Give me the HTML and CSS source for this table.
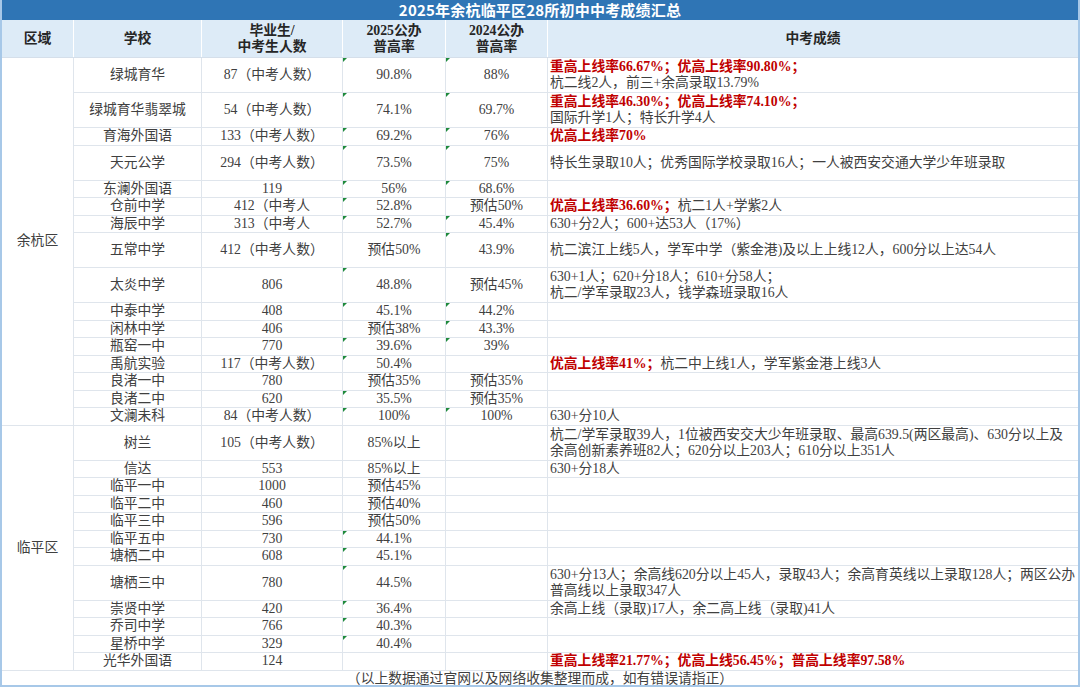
FILE: index.html
```html
<!DOCTYPE html>
<html lang="zh-CN">
<head>
<meta charset="utf-8">
<title>2025年余杭临平区28所初中中考成绩汇总</title>
<link rel="stylesheet" href="styles.css">
</head>
<body>
<div class="sheet">
  <div class="title">2025年余杭临平区28所初中中考成绩汇总</div>
  <div class="head">
    <div class="hc">区域</div>
    <div class="hc">学校</div>
    <div class="hc">毕业生/<br>中考生人数</div>
    <div class="hc">2025公办<br>普高率</div>
    <div class="hc">2024公办<br>普高率</div>
    <div class="hc">中考成绩</div>
  </div>
  <div class="body">
    <div class="c area yh">余杭区</div>
    <div class="c area lp">临平区</div>

    <div class="c">绿城育华</div><div class="c">87（中考人数）</div><div class="c m">90.8%</div><div class="c m">88%</div><div class="c res"><div class="t"><span class="red">重高上线率66.67%；优高上线率90.80%；</span><br>杭二线2人，前三+余高录取13.79%</div></div>
    <div class="c">绿城育华翡翠城</div><div class="c">54（中考人数）</div><div class="c m">74.1%</div><div class="c m">69.7%</div><div class="c res"><div class="t"><span class="red">重高上线率46.30%；优高上线率74.10%；</span><br>国际升学1人；特长升学4人</div></div>
    <div class="c">育海外国语</div><div class="c">133（中考人数）</div><div class="c m">69.2%</div><div class="c m">76%</div><div class="c res"><div class="t"><span class="red">优高上线率70%</span></div></div>
    <div class="c">天元公学</div><div class="c">294（中考人数）</div><div class="c m">73.5%</div><div class="c m">75%</div><div class="c res"><div class="t">特长生录取10人；优秀国际学校录取16人；一人被西安交通大学少年班录取</div></div>
    <div class="c">东澜外国语</div><div class="c">119</div><div class="c m">56%</div><div class="c m">68.6%</div><div class="c res"></div>
    <div class="c">仓前中学</div><div class="c">412（中考人</div><div class="c m">52.8%</div><div class="c">预估50%</div><div class="c res"><div class="t"><span class="red">优高上线率36.60%；</span>杭二1人+学紫2人</div></div>
    <div class="c">海辰中学</div><div class="c">313（中考人</div><div class="c m">52.7%</div><div class="c m">45.4%</div><div class="c res"><div class="t">630+分2人；600+达53人（17%）</div></div>
    <div class="c">五常中学</div><div class="c">412（中考人数）</div><div class="c">预估50%</div><div class="c m">43.9%</div><div class="c res"><div class="t">杭二滨江上线5人，学军中学（紫金港)及以上上线12人，600分以上达54人</div></div>
    <div class="c">太炎中学</div><div class="c">806</div><div class="c m">48.8%</div><div class="c">预估45%</div><div class="c res"><div class="t">630+1人；620+分18人；610+分58人；<br>杭二/学军录取23人，钱学森班录取16人</div></div>
    <div class="c">中泰中学</div><div class="c">408</div><div class="c m">45.1%</div><div class="c m">44.2%</div><div class="c res"></div>
    <div class="c">闲林中学</div><div class="c">406</div><div class="c">预估38%</div><div class="c m">43.3%</div><div class="c res"></div>
    <div class="c">瓶窑一中</div><div class="c">770</div><div class="c m">39.6%</div><div class="c m">39%</div><div class="c res"></div>
    <div class="c">禹航实验</div><div class="c">117（中考人数）</div><div class="c m">50.4%</div><div class="c"></div><div class="c res"><div class="t"><span class="red">优高上线率41%；</span>杭二中上线1人，学军紫金港上线3人</div></div>
    <div class="c">良渚一中</div><div class="c">780</div><div class="c">预估35%</div><div class="c">预估35%</div><div class="c res"></div>
    <div class="c">良渚二中</div><div class="c">620</div><div class="c m">35.5%</div><div class="c">预估35%</div><div class="c res"></div>
    <div class="c">文澜未科</div><div class="c">84（中考人数）</div><div class="c m">100%</div><div class="c m">100%</div><div class="c res"><div class="t">630+分10人</div></div>

    <div class="c">树兰</div><div class="c">105（中考人数）</div><div class="c">85%以上</div><div class="c"></div><div class="c res"><div class="t">杭二/学军录取39人，1位被西安交大少年班录取、最高639.5(两区最高)、630分以上及<br>余高创新素养班82人；620分以上203人；610分以上351人</div></div>
    <div class="c">信达</div><div class="c">553</div><div class="c">85%以上</div><div class="c"></div><div class="c res"><div class="t">630+分18人</div></div>
    <div class="c">临平一中</div><div class="c">1000</div><div class="c">预估45%</div><div class="c"></div><div class="c res"></div>
    <div class="c">临平二中</div><div class="c">460</div><div class="c">预估40%</div><div class="c"></div><div class="c res"></div>
    <div class="c">临平三中</div><div class="c">596</div><div class="c">预估50%</div><div class="c"></div><div class="c res"></div>
    <div class="c">临平五中</div><div class="c">730</div><div class="c m">44.1%</div><div class="c"></div><div class="c res"></div>
    <div class="c">塘栖二中</div><div class="c">608</div><div class="c m">45.1%</div><div class="c"></div><div class="c res"></div>
    <div class="c">塘栖三中</div><div class="c">780</div><div class="c m">44.5%</div><div class="c"></div><div class="c res"><div class="t">630+分13人；余高线620分以上45人，录取43人；余高育英线以上录取128人；两区公办<br>普高线以上录取347人</div></div>
    <div class="c">崇贤中学</div><div class="c">420</div><div class="c m">36.4%</div><div class="c"></div><div class="c res"><div class="t">余高上线（录取)17人，余二高上线（录取)41人</div></div>
    <div class="c">乔司中学</div><div class="c">766</div><div class="c m">40.3%</div><div class="c"></div><div class="c res"></div>
    <div class="c">星桥中学</div><div class="c">329</div><div class="c m">40.4%</div><div class="c"></div><div class="c res"></div>
    <div class="c">光华外国语</div><div class="c">124</div><div class="c"></div><div class="c"></div><div class="c res"><div class="t"><span class="red">重高上线率21.77%；优高上线56.45%；普高上线率97.58%</span></div></div>
  </div>
  <div class="foot">（以上数据通过官网以及网络收集整理而成，如有错误请指正）</div>
</div>
</body>
</html>
```

FILE: styles.css
```css
html, body {
  margin: 0;
  padding: 0;
  background: #ffffff;
}

.sheet {
  width: 1080px;
  height: 687px;
  box-sizing: border-box;
  border-left: 2px solid #a7c8e8;
  border-right: 2px solid #a7c8e8;
  border-bottom: 2px solid #a7c8e8;
  overflow: hidden;
  font-family: "Liberation Serif", "Noto Sans CJK SC", serif;
  font-size: 13.8px;
  color: #404040;
  display: flex;
  flex-direction: column;
}

.title {
  flex: 0 0 20px;
  height: 20px;
  line-height: 20px;
  margin: 0 -2px;
  background: #2f75b5;
  color: #ffffff;
  font-family: "Noto Sans CJK SC", "Liberation Sans", sans-serif;
  font-weight: 700;
  font-size: 15px;
  text-align: center;
  letter-spacing: 0.2px;
}

.head,
.body {
  display: grid;
  grid-template-columns: 71px 127px 140px 102px 101px 1fr;
  column-gap: 1px;
}

.head {
  flex: 0 0 37px;
  height: 37px;
  background: #ffffff;
}

.hc {
  background: #ddebf7;
  display: flex;
  align-items: center;
  justify-content: center;
  text-align: center;
  line-height: 16px;
  font-weight: 700;
  color: #262626;
}

.body {
  row-gap: 1px;
  background: #dfe5ec;
  border-top: 1px solid #d5dfea;
  grid-template-rows:
    34px 34px 16.5px 34px 16.5px 16.5px 16.5px 34px 34px
    repeat(7, 16.5px)
    34px repeat(6, 16.5px) 34px repeat(4, 16.5px);
  grid-auto-flow: row dense;
}

.c {
  background: #ffffff;
  display: flex;
  align-items: center;
  justify-content: center;
  white-space: nowrap;
  overflow: hidden;
  position: relative;
  line-height: 16px;
  padding: 0 2px;
}

.area {
  grid-column: 1;
}

.yh { grid-row: 1 / span 16; }
.lp { grid-row: 17 / span 12; }

.res {
  justify-content: flex-start;
  padding-left: 2px;
  overflow: visible;
}

.t {
  white-space: nowrap;
}

.red {
  color: #c00000;
  font-weight: 700;
}

.m::before {
  content: "";
  position: absolute;
  left: 0;
  top: 0;
  border-top: 4px solid #1e8a3c;
  border-right: 4px solid transparent;
}

.foot {
  flex: 1 1 auto;
  border-top: 1px solid #dfe5ec;
  display: flex;
  align-items: center;
  justify-content: center;
  line-height: 16px;
  white-space: nowrap;
}
```
